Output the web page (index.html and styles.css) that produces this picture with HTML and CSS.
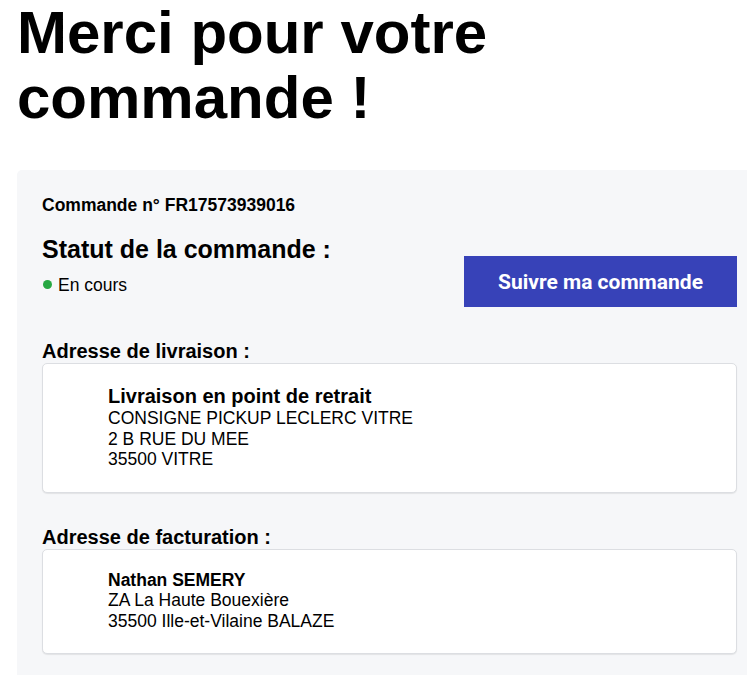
FILE: index.html
```html
<!DOCTYPE html>
<html lang="fr">
<head>
<meta charset="utf-8">
<title>Merci pour votre commande</title>
<link rel="stylesheet" href="styles.css">
</head>
<body>
<h1 class="title">Merci pour votre commande !</h1>
<section class="panel">
  <p class="order-no">Commande n° FR17573939016</p>
  <div class="status-row">
    <div class="status">
      <h2 class="status-title">Statut de la commande :</h2>
      <p class="status-value"><span class="dot"></span>En cours</p>
    </div>
    <a class="track-btn" href="#">Suivre ma commande</a>
  </div>
  <h3 class="label label-first">Adresse de livraison :</h3>
  <div class="card card-delivery">
    <p class="card-title">Livraison en point de retrait</p>
    <p class="line">CONSIGNE PICKUP LECLERC VITRE</p>
    <p class="line">2 B RUE DU MEE</p>
    <p class="line">35500 VITRE</p>
  </div>
  <h3 class="label label-next">Adresse de facturation :</h3>
  <div class="card card-billing">
    <p class="line card-name">Nathan SEMERY</p>
    <p class="line">ZA La Haute Bouexière</p>
    <p class="line">35500 Ille-et-Vilaine BALAZE</p>
  </div>
</section>
</body>
</html>
```
FILE: styles.css
```css
html, body {
  margin: 0;
  padding: 0;
  background: #ffffff;
}
body {
  font-family: "Liberation Sans", Arial, sans-serif;
  color: #000;
}
p, h1, h2, h3 {
  margin: 0;
}
.title {
  margin: 0 0 40px 17px;
  font-size: 60px;
  line-height: 65px;
  font-weight: 700;
}
.panel {
  margin-left: 17px;
  padding: 25px 10px 30px 25px;
  background: #f6f7f9;
  border-radius: 5px 0 0 5px;
}
.order-no {
  font-size: 17.5px;
  line-height: 21px;
  font-weight: 700;
}
.status-row {
  display: flex;
  justify-content: space-between;
  align-items: flex-start;
  margin-top: 18px;
}
.status-title {
  font-size: 25px;
  line-height: 30px;
  font-weight: 700;
}
.status-value {
  margin-top: 11px;
  font-size: 17.5px;
  line-height: 21px;
  display: flex;
  align-items: center;
}
.dot {
  width: 9px;
  height: 9px;
  border-radius: 50%;
  background: #27a843;
  margin: 0 6px 2px 1px;
}
.track-btn {
  margin-top: 22px;
  width: 273px;
  height: 51px;
  display: flex;
  align-items: center;
  justify-content: center;
  background: #3742b8;
  color: #fff;
  text-decoration: none;
  font-family: Roboto, "Liberation Sans", sans-serif;
  font-weight: 700;
  font-size: 21px;
}
.label {
  font-size: 20px;
  line-height: 24px;
  font-weight: 700;
}
.label-first {
  margin-top: 32px;
}
.label-next {
  margin-top: 32px;
}
.card {
  background: #fff;
  border: 1px solid #dcdee2;
  border-radius: 5px;
  box-shadow: 0 1px 1px rgba(0, 0, 0, 0.08);
  padding: 20px 20px 22px 65px;
}
.card-title {
  font-size: 20px;
  line-height: 24px;
  font-weight: 700;
}
.line {
  font-size: 17.5px;
  line-height: 20.5px;
}
.card-name {
  font-weight: 700;
}
```
